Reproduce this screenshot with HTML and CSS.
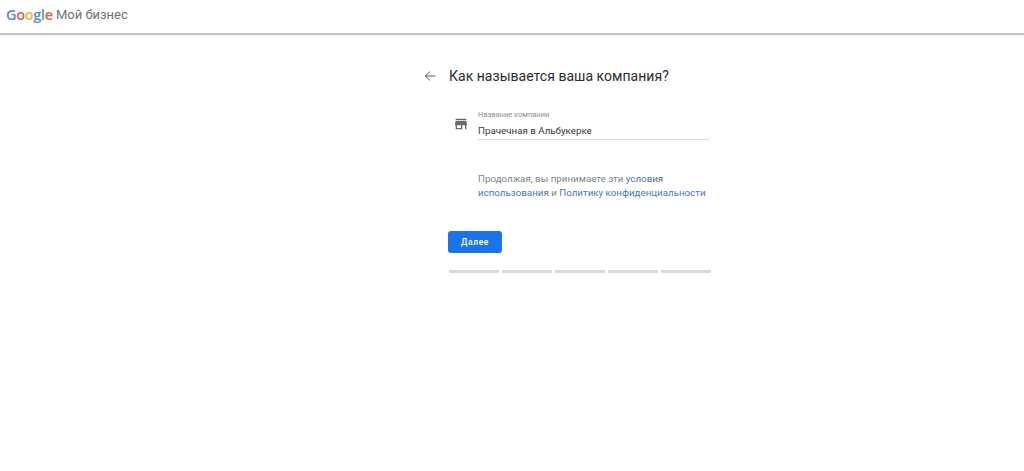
FILE: index.html
```html
<!DOCTYPE html>
<html lang="ru">
<head>
<meta charset="utf-8">
<title>Google Мой бизнес</title>
<link rel="stylesheet" href="styles.css">
</head>
<body>
<header class="topbar">
  <span class="logo"><span class="b">G</span><span class="r">o</span><span class="y">o</span><span class="b">g</span><span class="g">l</span><span class="r">e</span></span>
  <span class="product">Мой бизнес</span>
</header>
<main class="page">
  <div class="panel">
    <div class="title-row">
      <svg class="back" viewBox="0 0 24 24" width="16" height="16"><path d="M20 11.4H6.6l5.7-5.7-.9-.9L4.2 12l7.2 7.2.9-.9-5.7-5.7H20z"/></svg>
      <h1 class="title">Как называется ваша компания?</h1>
    </div>
    <div class="content">
      <div class="field-row">
        <svg class="store" viewBox="0 0 24 24" width="16" height="16"><path d="M20 4H4v2h16V4zm1 10v-2l-1-5H4l-1 5v2h1v6h10v-6h4v6h2v-6h1zm-9 4H6v-4h6v4z"/></svg>
        <div class="field">
          <div class="label">Название компании</div>
          <div class="value">Прачечная в Альбукерке</div>
        </div>
      </div>
      <p class="terms">Продолжая, вы принимаете эти <a href="#">условия использования</a> и <a href="#">Политику конфиденциальности</a></p>
      <button class="next" type="button">Далее</button>
      <div class="progress"><span></span><span></span><span></span><span></span><span></span></div>
    </div>
  </div>
</main>
</body>
</html>
```
FILE: styles.css
```css
* { box-sizing: border-box; }
html, body { margin: 0; height: 100%; background: #fff; }
body { font-family: Roboto, "Liberation Sans", sans-serif; color: #202124; overflow: hidden; }
.topbar {
  height: 35px;
  display: flex;
  align-items: flex-start;
  padding: 6px 0 0 6px;
  gap: 3px;
  border-bottom: 2px solid #c4c4c4;
  box-shadow: 0 1px 2px rgba(0,0,0,.08);
}
.logo { font: 600 14.5px/18px "Open Sans", "Liberation Sans", sans-serif; letter-spacing: -.3px; }
.b { color: #5a86cf; }
.r { color: #d8604f; }
.y { color: #e3b64f; }
.g { color: #5aa66a; }
.product { font-size: 13px; line-height: 18px; color: #6f7276; }
.page { padding: 31px 0 0 424px; }
.panel { width: 288px; }
.title-row { display: flex; align-items: center; gap: 11px; height: 20px; }
.back { fill: #5f6368; flex: none; margin-left: -2px; }
.title { margin: 0; font-size: 14px; font-weight: 400; line-height: 20px; letter-spacing: .03px; color: #2b2c2f; }
.content { padding: 24px 0 0 25px; }
.field-row { display: flex; gap: 9px; align-items: center; }
.store { fill: #66696d; flex: none; margin: 0 0 2px 4px; }
.field { flex: 1; border-bottom: 1px solid #dadce0; height: 30px; margin-right: 3px; }
.label { font-size: 7.5px; line-height: 10px; color: #8a8e93; }
.value { font-size: 9.75px; line-height: 14px; margin-top: 4px; color: #36373a; }
.terms { margin: 32px 0 0 29px; font-size: 9.75px; line-height: 14px; color: #7f8388; width: 236px; }
.terms a { color: #4a78b8; text-decoration: none; }
.next {
  display: block;
  margin: 31px 0 0 -1px;
  width: 54px;
  height: 22px;
  border: 0;
  border-radius: 3px;
  background: #1a73e8;
  color: #fff;
  font: 500 8.5px/22px Roboto, sans-serif;
  letter-spacing: .6px;
  padding: 0;
}
.progress { display: flex; gap: 3px; margin-top: 17px; width: 262px; }
.progress span { flex: 1; height: 3px; background: #d9d9d9; }
```
